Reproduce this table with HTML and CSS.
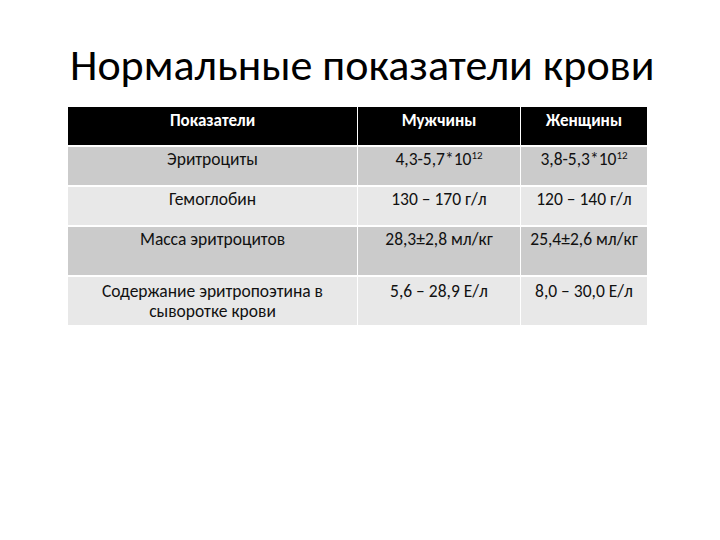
FILE: index.html
```html
<!DOCTYPE html>
<html lang="ru">
<head>
<meta charset="utf-8">
<link rel="stylesheet" href="styles.css">
</head>
<body>
<div class="slide">
  <h1 class="title">Нормальные показатели крови</h1>
  <div class="table">
    <div class="cell head">Показатели</div>
    <div class="cell head">Мужчины</div>
    <div class="cell head">Женщины</div>

    <div class="cell dark">Эритроциты</div>
    <div class="cell dark">4,3-5,7*10<sup>12</sup></div>
    <div class="cell dark">3,8-5,3*10<sup>12</sup></div>

    <div class="cell light">Гемоглобин</div>
    <div class="cell light">130 – 170 г/л</div>
    <div class="cell light">120 – 140 г/л</div>

    <div class="cell dark">Масса эритроцитов</div>
    <div class="cell dark">28,3±2,8 мл/кг</div>
    <div class="cell dark">25,4±2,6 мл/кг</div>

    <div class="cell light tall">Содержание эритропоэтина в сыворотке крови</div>
    <div class="cell light tall">5,6 – 28,9 Е/л</div>
    <div class="cell light tall">8,0 – 30,0 Е/л</div>
  </div>
</div>
</body>
</html>
```
FILE: styles.css
```css
html, body {
  margin: 0;
  padding: 0;
  background: #ffffff;
}

.slide {
  width: 720px;
  height: 540px;
  font-family: Carlito, Lato, "Open Sans", sans-serif;
  color: #000;
}

.title {
  margin: 0;
  padding: 40px 0 0 70px;
  height: 90px;
  font-size: 44px;
  font-weight: 400;
  line-height: 50px;
  box-sizing: border-box;
}

.table {
  margin: 17px 0 0 68px;
  width: 579px;
  display: grid;
  grid-template-columns: 289px 162px 126px;
  grid-template-rows: 38px 38px 38px 48px 48px;
  column-gap: 1px;
  row-gap: 2px;
  background: #ffffff;
}

.cell {
  text-align: center;
  font-size: 17.5px;
  line-height: 19px;
  padding: 3px 4px 0;
  color: #111;
}

.tall {
  line-height: 20px;
  padding-top: 4px;
}

.head {
  background: #000000;
  color: #ffffff;
  font-weight: 700;
  font-size: 17px;
  padding-top: 4px;
}

.dark {
  background: #cbcbcb;
}

.light {
  background: #e8e8e8;
}

sup {
  font-size: 11px;
  line-height: 0;
  vertical-align: 6px;
}
```
